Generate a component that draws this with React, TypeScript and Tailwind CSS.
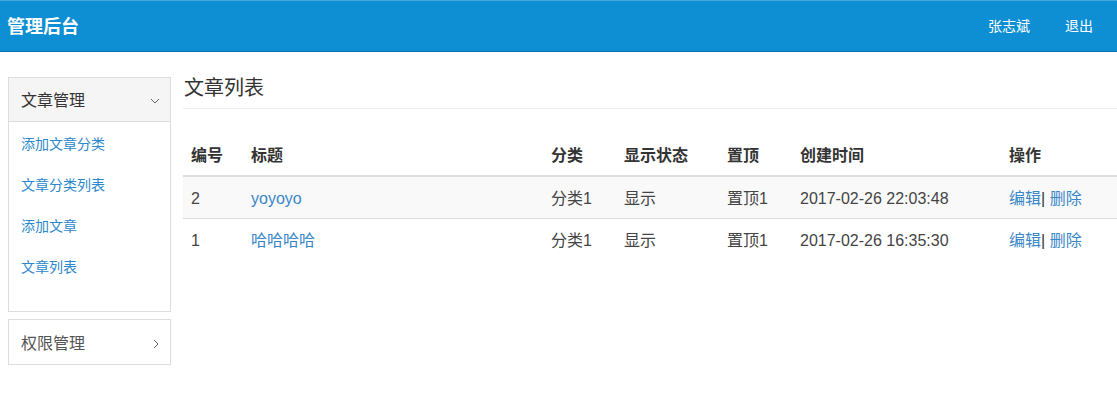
import React from "react";

const font = { fontFamily: '"Liberation Sans", "Noto Sans CJK SC", sans-serif' };

function ChevronDown() {
  return (
    <svg width="10" height="6" viewBox="0 0 10 6" fill="none">
      <polyline points="1,1 5,5 9,1" stroke="#666" strokeWidth="1" />
    </svg>
  );
}
function ChevronRight() {
  return (
    <svg width="6" height="10" viewBox="0 0 6 10" fill="none">
      <polyline points="1,1 5,5 1,9" stroke="#666" strokeWidth="1" />
    </svg>
  );
}

const rows = [
  { id: "2", title: "yoyoyo", cat: "分类1", show: "显示", top: "置顶1", time: "2017-02-26 22:03:48" },
  { id: "1", title: "哈哈哈哈", cat: "分类1", show: "显示", top: "置顶1", time: "2017-02-26 16:35:30" },
];

const grid = "grid grid-cols-[60px_300px_73px_103px_73px_209px_1fr]";
const cell = "px-[8px] pt-[11px] pb-[9px] leading-[21px]";

export default function App() {
  return (
    <div className="min-h-[411px] bg-white text-[#333]" style={font}>
      <header className="h-[52px] bg-[#0f8fd3] border-t border-[#4aa6dc] border-b border-b-[#0b72aa] flex items-center justify-between">
        <div className="pl-[7px] text-[18px] font-bold text-white leading-none pt-[2px]">管理后台</div>
        <div className="flex items-center text-[14px] text-white leading-none">
          <span className="mr-[35px]">张志斌</span>
          <span className="mr-[24px]">退出</span>
        </div>
      </header>
      <div className="flex pt-[25px]">
        <aside className="ml-[8px] w-[163px] flex flex-col gap-[7px]">
          <div className="border border-[#ddd]">
            <div className="h-[44px] bg-[#f5f5f5] border-b border-[#ddd] flex items-center justify-between pl-[12px] pr-[10px] pt-[3px]">
              <span className="text-[16px] text-[#333]">文章管理</span>
              <ChevronDown />
            </div>
            <ul className="pt-[2px] pb-[23px] pl-[12px] text-[14px] text-[#2b88cc]">
              {["添加文章分类", "文章分类列表", "添加文章", "文章列表"].map((t) => (
                <li key={t} className="h-[41px] flex items-center">{t}</li>
              ))}
            </ul>
          </div>
          <div className="h-[46px] border border-[#ddd] flex items-center justify-between pl-[12px] pr-[11px] pt-[3px]">
            <span className="text-[16px] text-[#555]">权限管理</span>
            <ChevronRight />
          </div>
        </aside>
        <main className="ml-[12px] flex-1">
          <h1 className="text-[20px] leading-[22px] pb-[9px] border-b border-[#eee] pl-[1px] text-[#333]">文章列表</h1>
          <div className="mt-[25px] text-[16px]">
            <div className={`${grid} border-b-2 border-[#ddd] font-bold text-[#333]`}>
              {["编号", "标题", "分类", "显示状态", "置顶", "创建时间", "操作"].map((h) => (
                <div key={h} className={cell}>{h}</div>
              ))}
            </div>
            {rows.map((r, i) => (
              <div
                key={r.id}
                className={`${grid} text-[#444] ${i === 0 ? "bg-[#f9f9f9]" : "border-t border-[#ddd]"}`}
              >
                <div className={cell}>{r.id}</div>
                <div className={`${cell} text-[#3a87c8]`}>{r.title}</div>
                <div className={cell}>{r.cat}</div>
                <div className={cell}>{r.show}</div>
                <div className={cell}>{r.top}</div>
                <div className={cell}>{r.time}</div>
                <div className={`${cell} whitespace-nowrap`}>
                  <span className="text-[#3a87c8]">编辑</span>
                  <span className="text-[#333]">|</span> <span className="text-[#3a87c8]">删除</span>
                </div>
              </div>
            ))}
          </div>
        </main>
      </div>
    </div>
  );
}
